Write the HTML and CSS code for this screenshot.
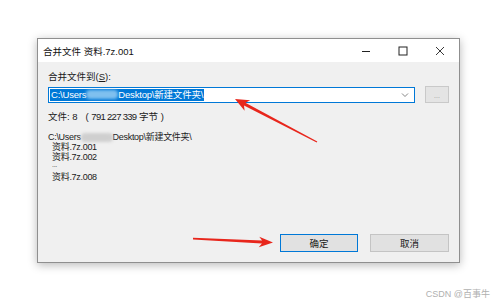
FILE: index.html
```html
<!DOCTYPE html>
<html lang="zh">
<head>
<meta charset="utf-8">
<link rel="stylesheet" href="styles.css">
</head>
<body>
<div class="page">
  <div class="dialog">
    <div class="titlebar">
      <span class="title">合并文件 资料.7z.001</span>
      <div class="controls">
        <svg class="ctl" width="10" height="10" viewBox="0 0 10 10"><path d="M1 5.5H9" stroke="#222" stroke-width="1"/></svg>
        <svg class="ctl" width="10" height="10" viewBox="0 0 10 10"><rect x="1" y="1" width="8" height="8" fill="none" stroke="#222" stroke-width="1"/></svg>
        <svg class="ctl" width="10" height="10" viewBox="0 0 10 10"><path d="M1 1L9 9M9 1L1 9" stroke="#222" stroke-width="0.9"/></svg>
      </div>
    </div>
    <div class="body">
      <div class="label">合并文件到(<u>S</u>):</div>
      <div class="row">
        <div class="combo">
          <span class="sel">C:\Users<span class="blur blur-blue"></span>Desktop\新建文件夹\</span>
          <svg class="chev" width="8" height="6" viewBox="0 0 8 6"><path d="M1 1.5L4 4.5L7 1.5" fill="none" stroke="#777" stroke-width="0.9"/></svg>
        </div>
        <div class="browse">...</div>
      </div>
      <div class="info">文件: 8 &nbsp;&nbsp;( <span class="num">791 227 339</span> 字节 )</div>
      <div class="list">
        <div class="path">C:\Users<span class="blur blur-grey"></span>Desktop\新建文件夹\</div>
        <div class="item">资料.7z.001</div>
        <div class="item">资料.7z.002</div>
        <div class="item dots">...</div>
        <div class="item">资料.7z.008</div>
      </div>
      <div class="buttons">
        <div class="btn btn-default">确定</div>
        <div class="btn">取消</div>
      </div>
    </div>
  </div>
  <div class="watermark">CSDN @百事牛</div>
  <svg class="arrows" width="500" height="302" viewBox="0 0 500 302">
    <polygon fill="#e8261c" points="235,99 250.2,100.2 245.4,102.8 317.3,141.5 316.7,142.5 244.0,105.4 244.6,110.8"/>
    <polygon fill="#e8261c" points="273,242.5 259.25,236.8 262.1,240.5 193,237.8 193,239.4 261.9,243.5 258.75,247.2"/>
  </svg>
</div>
</body>
</html>
```
FILE: styles.css
```css
html, body {
  margin: 0;
  padding: 0;
  background: #ffffff;
}
.page {
  position: relative;
  width: 500px;
  height: 302px;
  overflow: hidden;
  font-family: "Liberation Sans", "Noto Sans CJK SC", sans-serif;
  font-size: 9px;
  color: #1a1a1a;
  padding-top: 38px;
  box-sizing: border-box;
}
.dialog {
  margin-left: 37px;
  width: 423px;
  height: 225px;
  box-sizing: border-box;
  border: 1px solid #8f8f8f;
  box-shadow: 0 2px 9px rgba(0, 0, 0, 0.28);
  display: flex;
  flex-direction: column;
  background: #f0f0f0;
}
.titlebar {
  height: 23px;
  background: #ffffff;
  display: flex;
  align-items: center;
  justify-content: space-between;
  padding-left: 5px;
}
.title {
  font-size: 9.5px;
  color: #111;
}
.controls {
  display: flex;
  align-items: center;
  gap: 27px;
  padding-right: 14px;
}
.ctl {
  display: block;
}
.body {
  flex: 1;
  display: flex;
  flex-direction: column;
  padding: 9px 10px 10px 10px;
}
.label {
  line-height: 12px;
  font-size: 9.5px;
}
.row {
  display: flex;
  align-items: center;
  gap: 10px;
  margin-top: 3px;
}
.combo {
  flex: 1;
  height: 16px;
  box-sizing: border-box;
  border: 1px solid #0078d7;
  background: #ffffff;
  display: flex;
  align-items: center;
  justify-content: space-between;
  padding: 0 5px 0 1px;
}
.sel {
  background: #0078d7;
  color: #ffffff;
  line-height: 12px;
  padding: 0 1px;
  font-size: 9.5px;
  letter-spacing: -0.2px;
  display: flex;
  align-items: center;
}
.blur {
  display: inline-block;
  height: 9px;
  border-radius: 4px;
  filter: blur(1.5px);
}
.blur-blue {
  width: 32px;
  background: #7fc0ef;
}
.blur-grey {
  width: 32px;
  background: #cfcfcf;
  vertical-align: middle;
}
.chev {
  display: block;
}
.browse {
  width: 24px;
  height: 17px;
  box-sizing: border-box;
  border: 1px solid #c9c9c9;
  background: #e4e4e4;
  color: #999;
  font-size: 7px;
  display: flex;
  align-items: flex-end;
  justify-content: center;
  padding-bottom: 3px;
}
.info {
  margin-top: 8px;
  line-height: 12px;
  font-size: 9.5px;
}
.num {
  letter-spacing: -0.7px;
}
.list {
  margin-top: 9px;
  line-height: 10px;
  letter-spacing: -0.3px;
}
.item {
  padding-left: 4px;
}
.dots {
  height: 10px;
  line-height: 6px;
  color: #444;
  font-size: 7px;
}
.buttons {
  margin-top: auto;
  display: flex;
  justify-content: flex-end;
  gap: 12px;
}
.btn {
  width: 79px;
  height: 18px;
  box-sizing: border-box;
  border: 1px solid #c4c4c4;
  background: #e1e1e1;
  display: flex;
  align-items: center;
  justify-content: center;
  font-size: 9.5px;
}
.btn-default {
  width: 78px;
  border: 1px solid #0078d7;
}
.watermark {
  text-align: right;
  padding-right: 10px;
  margin-top: 24px;
  font-size: 9px;
  color: #b0b0b0;
}
.arrows {
  position: absolute;
  left: 0;
  top: 0;
  pointer-events: none;
}
```
